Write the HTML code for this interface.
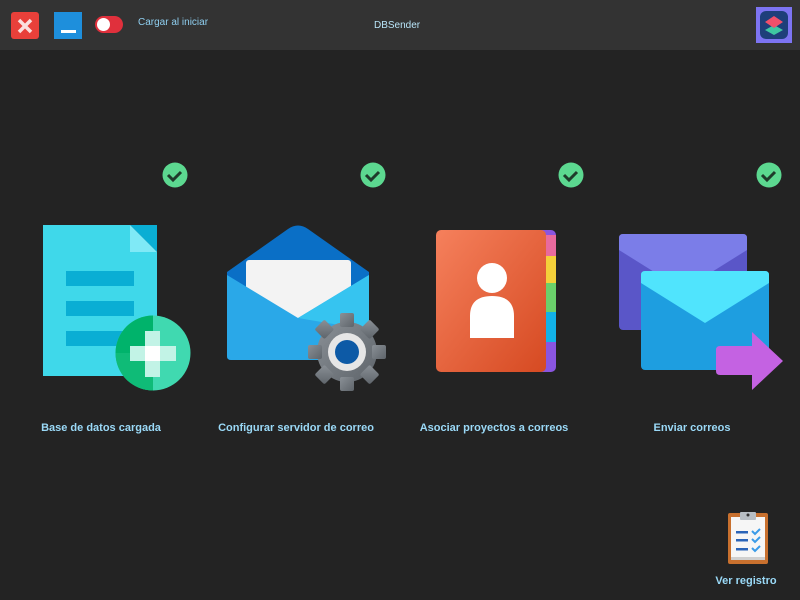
<!DOCTYPE html>
<html><head><meta charset="utf-8"><style>
body{margin:0;width:800px;height:600px;background:#232323;overflow:hidden;font-family:"Liberation Sans","DejaVu Sans",sans-serif;position:relative}
.bar{position:absolute;left:0;top:0;width:800px;height:50px;background:#333}
.t{position:absolute;color:#8fcff0;font-size:10px}
.lbl{position:absolute;top:422px;color:#9ad9f7;font-size:11px;font-weight:bold;transform:translateX(-50%);white-space:nowrap}
svg{position:absolute;left:0;top:0}
</style></head><body>
<div class="bar"></div>
<div class="t" style="left:138px;top:17px">Cargar al iniciar</div>
<div class="t" style="left:374px;top:20px;color:#b8e4f8">DBSender</div>
<div class="lbl" style="left:101px">Base de datos cargada</div>
<div class="lbl" style="left:296px">Configurar servidor de correo</div>
<div class="lbl" style="left:494px">Asociar proyectos a correos</div>
<div class="lbl" style="left:692px">Enviar correos</div>
<div class="lbl" style="left:746px;top:575px">Ver registro</div>
<svg width="800" height="600" viewBox="0 0 800 600">
<defs>
<linearGradient id="ob" x1="0" y1="0" x2="1" y2="1"><stop offset="0" stop-color="#f5805c"/><stop offset="1" stop-color="#d64a22"/></linearGradient>
<linearGradient id="gr" x1="0" y1="0" x2="1" y2="1"><stop offset="0" stop-color="#8a9096"/><stop offset="1" stop-color="#5e646a"/></linearGradient>
</defs>
<rect x="11" y="12" width="28" height="27" rx="3" fill="#e8403a"/>
<path d="M19 20 L31 32 M31 20 L19 32" stroke="#fbe0de" stroke-width="3.5"/>
<rect x="54" y="12" width="28" height="27" fill="#1e8fdc"/>
<rect x="61" y="30" width="15" height="3" fill="#fff"/>
<rect x="95" y="16" width="28" height="17" rx="8.5" fill="#e0303c"/>
<circle cx="103.5" cy="24.5" r="6.5" fill="#fff"/>
<rect x="756" y="7" width="36" height="36" fill="#7d74f2"/>
<rect x="760" y="11" width="28" height="28" rx="6" fill="#1e3f7a"/>
<path d="M774 25 l9 5 l-9 5 l-9 -5z" fill="#3fc7a2"/>
<path d="M774 16 l9 6 l-9 6 l-9 -6z" fill="#f0506a"/>
<g fill="#5cd890">
<circle cx="175" cy="175" r="12.5"/><circle cx="373" cy="175" r="12.5"/><circle cx="571" cy="175" r="12.5"/><circle cx="769" cy="175" r="12.5"/></g>
<g stroke="#1f3b2b" stroke-width="3" fill="none">
<path d="M168 175 l5 5 l8 -8"/><path d="M366 175 l5 5 l8 -8"/><path d="M564 175 l5 5 l8 -8"/><path d="M762 175 l5 5 l8 -8"/></g>
<path d="M43 225 H130 L157 252 V376 H43z" fill="#3fd8ea"/>
<path d="M130 225 H157 V252z" fill="#0aaed4"/>
<path d="M130 225 V252 H157z" fill="#7fe9f6"/>
<g fill="#0aaed4"><rect x="66" y="271" width="68" height="15"/><rect x="66" y="301" width="68" height="15"/><rect x="66" y="331" width="68" height="15"/></g>
<circle cx="153" cy="353" r="37.5" fill="#40d9b0"/>
<path d="M153 315.5 A37.5 37.5 0 0 0 153 390.5z" fill="#00b36b"/>
<path d="M153 353 H115.5 A37.5 37.5 0 0 0 153 390.5z" fill="#19c07f" opacity=".6"/>
<rect x="130" y="346" width="46" height="15" fill="#c2f3e6"/>
<rect x="145" y="331" width="15" height="46" fill="#c2f3e6"/>
<rect x="145" y="346" width="15" height="15" fill="#fff"/>
<path d="M227 272 L288 229 Q298 222 308 229 L369 272 V356 Q369 360 365 360 H231 Q227 360 227 356z" fill="#0a6fc6"/>
<rect x="246" y="260" width="105" height="70" rx="3" fill="#f3f3f3"/>
<path d="M227 275 L298 318 L369 275 V356 Q369 360 365 360 H231 Q227 360 227 356z" fill="#2aa8e8"/>
<path d="M298 318 L369 275 V330z" fill="#36c4f0"/>
<g transform="translate(347,352)" fill="url(#gr)">
<circle r="30"/>
<g><rect x="-7" y="-39" width="14" height="14" rx="2"/><rect x="-7" y="25" width="14" height="14" rx="2"/><rect x="-39" y="-7" width="14" height="14" rx="2"/><rect x="25" y="-7" width="14" height="14" rx="2"/>
<g transform="rotate(45)"><rect x="-7" y="-39" width="14" height="14" rx="2"/><rect x="-7" y="25" width="14" height="14" rx="2"/><rect x="-39" y="-7" width="14" height="14" rx="2"/><rect x="25" y="-7" width="14" height="14" rx="2"/></g></g>
<circle r="19" fill="#e6e6e6"/><circle r="12" fill="#0d5aa6"/>
</g>
<rect x="520" y="230" width="36" height="142" rx="5" fill="#8a55e0"/>
<rect x="545" y="235" width="11" height="21" fill="#e86a9e"/>
<rect x="545" y="256" width="11" height="27" fill="#f4d03a"/>
<rect x="545" y="283" width="11" height="29" fill="#6bd06b"/>
<rect x="545" y="312" width="11" height="30" fill="#12b2e8"/>
<rect x="436" y="230" width="110" height="142" rx="5" fill="url(#ob)"/>
<circle cx="492" cy="278" r="15" fill="#fff"/>
<path d="M470 338 V316 Q470 296 492 296 Q514 296 514 316 V338z" fill="#fff"/>
<rect x="619" y="234" width="128" height="96" rx="4" fill="#5a56c8"/>
<path d="M619 238 Q619 234 623 234 H743 Q747 234 747 238 V250 L683 290 L619 250z" fill="#7b7de8"/>
<rect x="641" y="271" width="128" height="99" rx="4" fill="#1e9ee0"/>
<path d="M641 275 Q641 271 645 271 H765 Q769 271 769 275 V283 L705 323 L641 283z" fill="#50e4fd"/>
<path d="M716 350 Q716 346 720 346 H752 V332 L783 361 L752 390 V375 H720 Q716 375 716 371z" fill="#c462e2"/>
<rect x="728" y="513" width="40" height="51" rx="2" fill="#c8702e"/>
<rect x="731" y="517" width="34" height="43" fill="#f6f6f6"/>
<rect x="731" y="557" width="34" height="3" fill="#d0d0d0"/>
<rect x="740" y="512" width="16" height="8" rx="1" fill="#b8bec4"/>
<circle cx="748" cy="515" r="1.5" fill="#333"/>
<g fill="#2a64b8"><rect x="736" y="531" width="12" height="2.5"/><rect x="736" y="539" width="12" height="2.5"/><rect x="736" y="548" width="12" height="2.5"/></g>
<g stroke="#3a9be8" stroke-width="2" fill="none"><path d="M752 531 l3 3 l5 -5"/><path d="M752 539 l3 3 l5 -5"/><path d="M752 548 l3 3 l5 -5"/></g>
</svg>
</body></html>
